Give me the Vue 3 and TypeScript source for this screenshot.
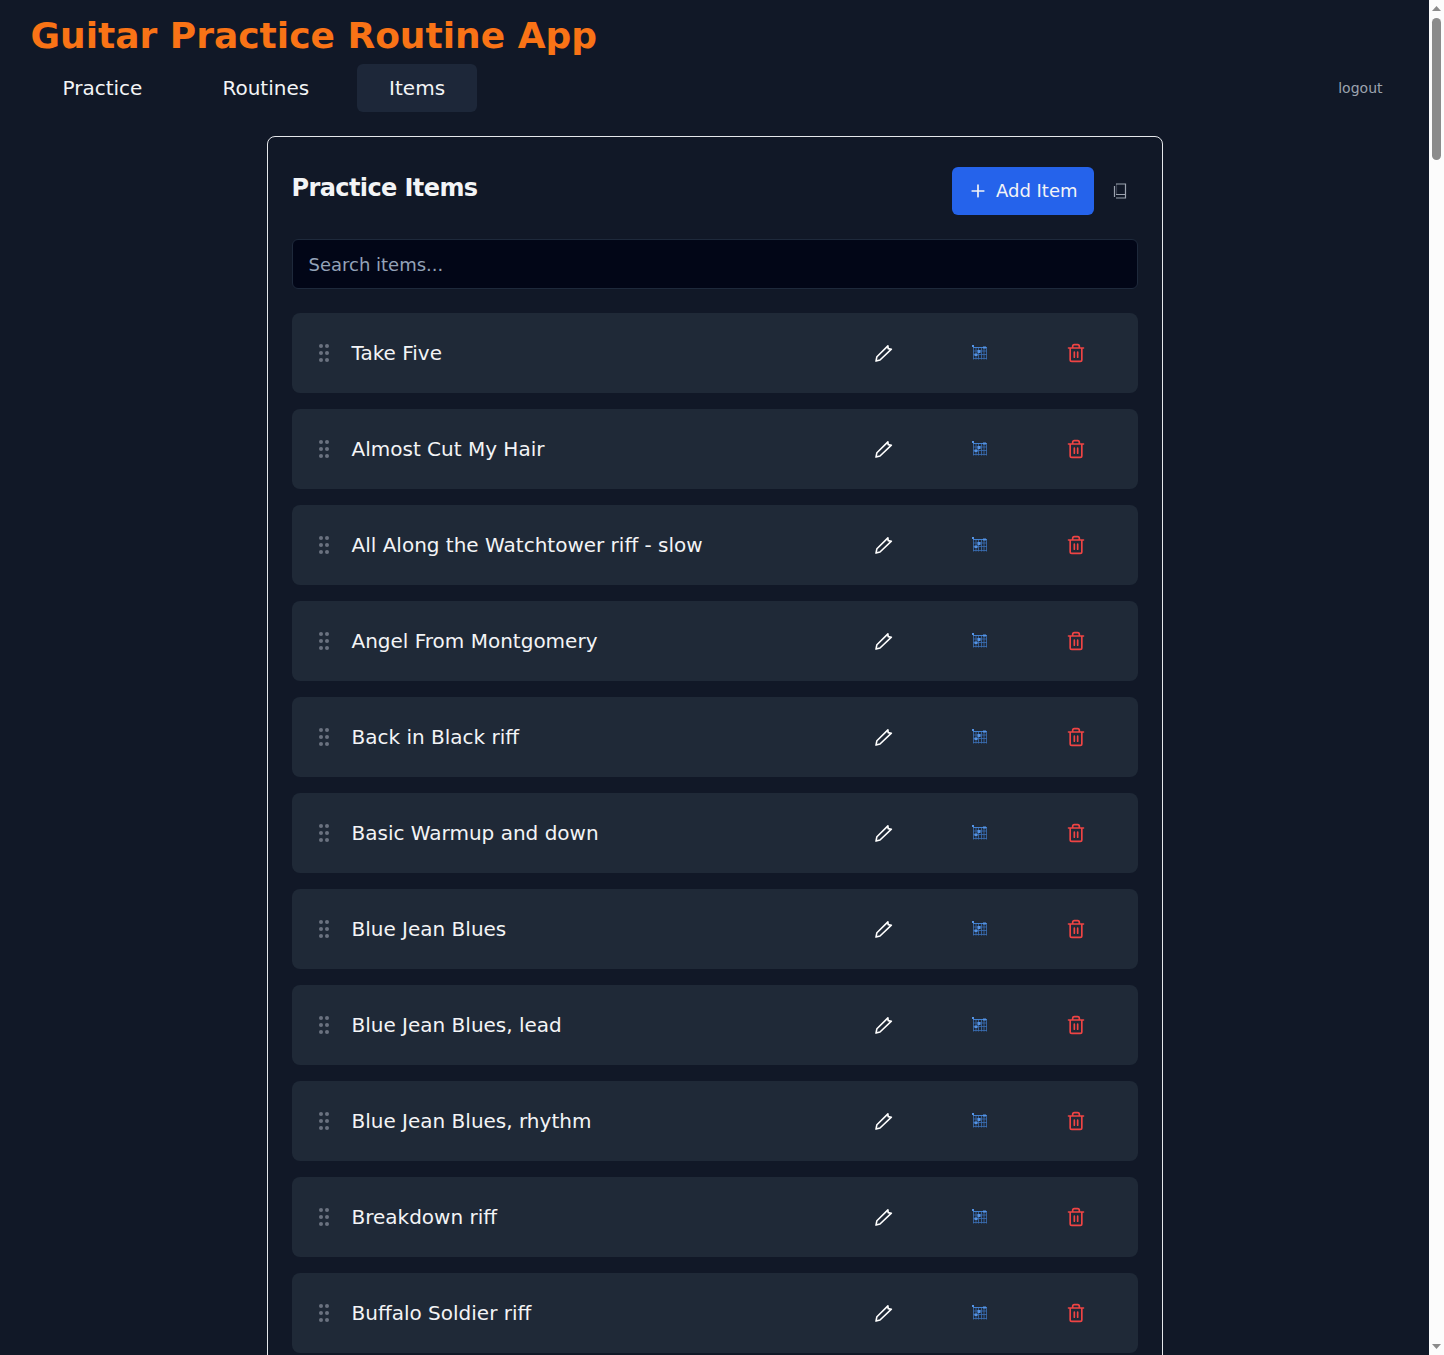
<script setup lang="ts">
import { ref } from 'vue'

interface Tab {
  label: string
  active: boolean
}

const tabs: Tab[] = [
  { label: 'Practice', active: false },
  { label: 'Routines', active: false },
  { label: 'Items', active: true },
]

const items: string[] = [
  'Take Five',
  'Almost Cut My Hair',
  'All Along the Watchtower riff - slow',
  'Angel From Montgomery',
  'Back in Black riff',
  'Basic Warmup and down',
  'Blue Jean Blues',
  'Blue Jean Blues, lead',
  'Blue Jean Blues, rhythm',
  'Breakdown riff',
  'Buffalo Soldier riff',
]

const search = ref('')
</script>

<template>
  <div class="window">
    <div class="page">
      <header class="header">
        <h1 class="title">Guitar Practice Routine App</h1>
        <nav class="nav">
          <div class="tabs">
            <a v-for="tab in tabs" :key="tab.label" href="#" class="tab" :class="{ active: tab.active }">{{ tab.label }}</a>
          </div>
          <button type="button" class="logout">logout</button>
        </nav>
      </header>

      <main class="card">
        <div class="card-head">
          <h2 class="heading">Practice Items</h2>
          <div class="head-actions">
            <button type="button" class="add">
              <svg class="icon" viewBox="0 0 24 24" aria-hidden="true"><path d="M5 12h14M12 5v14" /></svg>
              Add Item
            </button>
            <button type="button" class="copy" aria-label="Copy items">
              <svg class="copy-icon" viewBox="0 0 16 18" aria-hidden="true">
                <path d="M4 2h9.500v14H4M2.500 4v11M4 12.500h9.500" />
                <path class="faint" d="M4.500 2v10" />
              </svg>
            </button>
          </div>
        </div>

        <input v-model="search" class="search" type="text" placeholder="Search items..." aria-label="Search items" />

        <ul class="list">
          <li v-for="item in items" :key="item" class="row">
            <svg class="grip" viewBox="0 0 24 24" aria-hidden="true">
              <circle cx="9" cy="5" r="2" /><circle cx="9" cy="12" r="2" /><circle cx="9" cy="19" r="2" />
              <circle cx="15" cy="5" r="2" /><circle cx="15" cy="12" r="2" /><circle cx="15" cy="19" r="2" />
            </svg>
            <span class="name">{{ item }}</span>
            <div class="actions">
              <button type="button" class="action edit" aria-label="Edit">
                <svg class="icon" viewBox="0 0 20 20" aria-hidden="true">
                  <path d="M13.900 2.900l.3 2.700 3.200.6L6 17l-4 1.100.9-4.400z" />
                </svg>
              </button>
              <button type="button" class="action chords" aria-label="Chord charts">
                <svg class="chord-icon" viewBox="0 0 16 16" aria-hidden="true">
                  <path class="grid" d="M1.500 2v12.500M4 2v12.500M6.500 2v12.500M9.500 2v12.500M12 2v12.500M14.500 2v12.500M1 6h14M1 9.500h14M1 13.500h14" />
                  <path class="nut" d="M1 2.500h14" />
                  <path class="dots" d="M0 0h2v2H0zM11 1.500h3v2h-3zM5.500 5h3v3h-3zM2.500 8.500h3v2.500h-3z" />
                </svg>
              </button>
              <button type="button" class="action remove" aria-label="Delete">
                <svg class="icon" viewBox="0 0 24 24" aria-hidden="true">
                  <path d="M3 6h18M19 6v14a2 2 0 0 1-2 2H7a2 2 0 0 1-2-2V6M8 6V4a2 2 0 0 1 2-2h4a2 2 0 0 1 2 2v2M10 11v6M14 11v6" />
                </svg>
              </button>
            </div>
          </li>
        </ul>
      </main>
    </div>

    <div class="scrollbar" aria-hidden="true">
      <svg class="arrow" viewBox="0 0 9 5"><path d="M4.500 0L9 5H0z" /></svg>
      <div class="track"><div class="thumb"></div></div>
      <svg class="arrow" viewBox="0 0 9 5"><path d="M0 0h9L4.500 5z" /></svg>
    </div>
  </div>
</template>

<style>
body {
  margin: 0;
  background: #111827;
}
</style>

<style scoped>
.window {
  display: flex;
  height: 100vh;
  overflow: hidden;
  background: #111827;
  color: #f3f4f6;
  font-family: "DejaVu Sans", sans-serif;
}

.window *,
.window {
  box-sizing: border-box;
}

button,
input {
  font-family: inherit;
}

button {
  border: 0;
  padding: 0;
  background: transparent;
  cursor: pointer;
}

.page {
  flex: 1;
  min-width: 0;
  overflow: hidden;
}

.header {
  max-width: 1400px;
  margin: 0 auto;
  padding: 16px 16px 0;
}

.title {
  margin: 0 0 8px;
  font-size: 36px;
  line-height: 40px;
  font-weight: 700;
  color: #f97316;
}

.nav {
  display: flex;
  align-items: center;
  justify-content: space-between;
}

.tabs {
  display: flex;
  gap: 16px;
}

.tab {
  padding: 10px 32px;
  border-radius: 6px;
  font-size: 20px;
  line-height: 28px;
  color: #f3f4f6;
  text-decoration: none;
}

.tab.active {
  background: #1d2739;
}

.logout {
  padding: 8px 16px;
  font-size: 14px;
  line-height: 20px;
  color: #9ca3af;
}

.card {
  max-width: 896px;
  margin: 24px auto 0;
  padding: 30px 24px;
  border: 1px solid #e5e7eb;
  border-radius: 8px;
}

.card-head {
  display: flex;
  justify-content: space-between;
  align-items: flex-start;
  margin-bottom: 24px;
}

.heading {
  margin: 5px 0 0;
  font-size: 24px;
  line-height: 32px;
  font-weight: 700;
  letter-spacing: -0.025em;
}

.head-actions {
  display: flex;
  align-items: center;
  gap: 8px;
}

.add {
  display: flex;
  align-items: center;
  gap: 8px;
  height: 48px;
  padding: 0 16px;
  border-radius: 6px;
  background: #2563eb;
  color: #f3f4f6;
  font-size: 18px;
  line-height: 28px;
}

.icon {
  width: 20px;
  height: 20px;
  fill: none;
  stroke: currentColor;
  stroke-width: 2;
  stroke-linecap: round;
  stroke-linejoin: round;
}

.copy {
  display: flex;
  align-items: center;
  justify-content: center;
  width: 36px;
  height: 36px;
  color: #9ca3af;
}

.copy-icon {
  width: 16px;
  height: 18px;
  fill: none;
  stroke: currentColor;
  stroke-width: 1.200;
}

.faint {
  opacity: 0.3;
}

.search {
  display: block;
  width: 100%;
  height: 50px;
  margin-bottom: 24px;
  padding: 0 16px;
  border: 1px solid #1e293b;
  border-radius: 6px;
  background: #020617;
  color: #f3f4f6;
  font-size: 18px;
}

.search::placeholder {
  color: #94a3b8;
  opacity: 1;
}

.list {
  display: flex;
  flex-direction: column;
  gap: 16px;
  margin: 0;
  padding: 0;
  list-style: none;
}

.row {
  display: flex;
  align-items: center;
  height: 80px;
  padding: 0 22px 0 20px;
  border-radius: 8px;
  background: #1f2937;
}

.grip {
  width: 24px;
  height: 24px;
  margin-right: 16px;
  fill: #6b7280;
}

.name {
  flex: 1;
  font-size: 20px;
  line-height: 28px;
}

.actions {
  display: flex;
  gap: 16px;
}

.action {
  display: flex;
  align-items: center;
  justify-content: center;
  width: 80px;
  height: 48px;
}

.edit {
  color: #ffffff;
}

.edit .icon {
  stroke-width: 1.600;
}

.chords {
  color: #60a5fa;
}

.remove {
  color: #ef4444;
}

.chord-icon {
  width: 16px;
  height: 16px;
}

.grid,
.nut {
  fill: none;
  stroke: #3b6fb5;
}

.grid {
  opacity: 0.8;
}

.nut {
  stroke: #4381d0;
}

.dots {
  fill: #5593e4;
}

.scrollbar {
  display: flex;
  flex-direction: column;
  align-items: center;
  width: 15px;
  padding: 6px 0;
  background: #fcfcfc;
}

.arrow {
  width: 9px;
  height: 5px;
  fill: #8b8b8b;
}

.track {
  flex: 1;
  padding: 7px 0;
}

.thumb {
  width: 9px;
  height: 142px;
  border-radius: 5px;
  background: #8b8b8b;
}
</style>
